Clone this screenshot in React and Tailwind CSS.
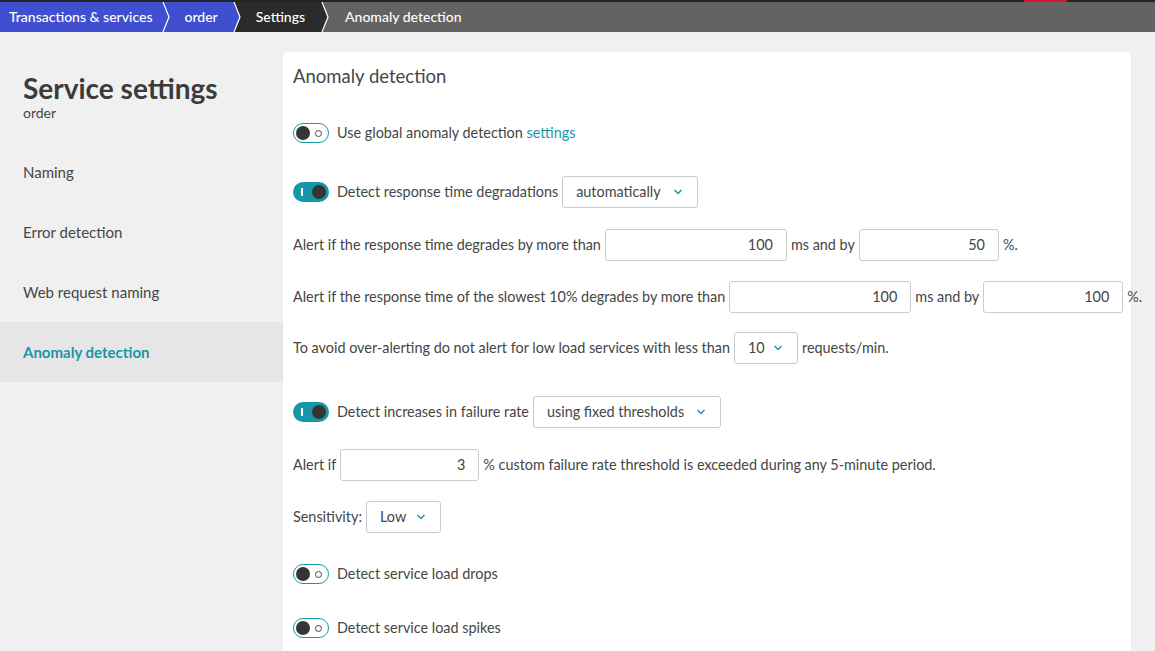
import React from 'react';

const TEXT = 'text-[#454646]';

const Chevron = ({ left, right }) => (
  <svg width="14" height="30" viewBox="0 0 14 30" className="block shrink-0">
    <rect x="0" y="0" width="14" height="30" fill={right} />
    <polygon points="0,0 5,0 11,15 5,30 0,30" fill={left} />
    <polyline points="5,0 11,15 5,30" fill="none" stroke="#ffffff" strokeWidth="1.2" />
  </svg>
);

const Breadcrumbs = () => (
  <div className="flex h-[30px] items-stretch bg-[#636363] text-[14px] font-medium text-white">
    <div className="flex items-center bg-[#3f4fd0] pb-[2px] pl-[9px] pr-[6px]">Transactions &amp; services</div>
    <Chevron left="#3f4fd0" right="#3f4fd0" />
    <div className="flex items-center bg-[#3f4fd0] pb-[2px] pl-[12px] pr-[11px]">order</div>
    <Chevron left="#3f4fd0" right="#2b2b2b" />
    <div className="flex items-center bg-[#2b2b2b] pb-[2px] pl-[13px] pr-[12px]">Settings</div>
    <Chevron left="#2b2b2b" right="#636363" />
    <div className="flex items-center pb-[2px] pl-[14px]">Anomaly detection</div>
  </div>
);

const Toggle = ({ on }) =>
  on ? (
    <div className="flex h-[20px] w-[36px] shrink-0 items-center justify-between rounded-full bg-[#1796a8] pl-[8px] pr-[3px]">
      <span className="block h-[8px] w-[1.5px] bg-white" />
      <span className="block h-[14px] w-[14px] rounded-full bg-[#353535]" />
    </div>
  ) : (
    <div className="flex h-[20px] w-[36px] shrink-0 items-center justify-between rounded-full border border-[#1796a8] bg-white pl-[2px] pr-[6px]">
      <span className="block h-[14px] w-[14px] rounded-full bg-[#353535]" />
      <span className="block h-[7px] w-[7px] rounded-full border border-[#454646]" />
    </div>
  );

const Caret = () => (
  <svg width="10" height="6" viewBox="0 0 10 6" className="shrink-0">
    <polyline points="1.5,1 5,4.5 8.5,1" fill="none" stroke="#1796a8" strokeWidth="1.4" />
  </svg>
);

const Select = ({ value, width }) => (
  <div className={`flex h-[32px] shrink-0 items-center justify-between rounded-[3px] border border-[#cccccc] bg-white pl-[13px] pr-[14px] ${width}`}>
    <span>{value}</span>
    <Caret />
  </div>
);

const NumInput = ({ value, width }) => (
  <div className={`flex h-[32px] shrink-0 items-center justify-end rounded-[3px] border border-[#cccccc] bg-white pr-[13px] ${width}`}>
    {value}
  </div>
);

const Row = ({ children, className = '' }) => (
  <div className={`flex h-[34px] items-center gap-[4px] whitespace-nowrap ${className}`}>{children}</div>
);

const navItems = ['Naming', 'Error detection', 'Web request naming', 'Anomaly detection'];

export default function App() {
  return (
    <div
      className={`h-[651px] overflow-hidden bg-[#f0f0f0] ${TEXT}`}
      style={{ fontFamily: 'Lato, "Open Sans", sans-serif' }}
    >
      <div className="relative h-[2px] bg-[#242424]">
        <div className="absolute left-[1024px] top-0 h-[2px] w-[43px] bg-[#dc172a]" />
      </div>
      <Breadcrumbs />

      <div className="flex pt-[20px]">
        <aside className="w-[283px] shrink-0">
          <div className="pl-[23px] pt-[20px]">
            <h1 className="text-[28px] font-bold leading-[32px] text-[#3b3b3b]">Service settings</h1>
            <div className="mt-[-2px] text-[14px]">order</div>
          </div>
          <nav className="mt-[19px]">
            {navItems.map((item) => {
              const active = item === 'Anomaly detection';
              return (
                <div
                  key={item}
                  className={`flex h-[60px] items-center pl-[23px] text-[15px] ${
                    active ? 'bg-[#e6e6e6] font-bold text-[#1796a8]' : ''
                  }`}
                >
                  {item}
                </div>
              );
            })}
          </nav>
        </aside>

        <main className="h-[700px] w-[848px] shrink-0 rounded-t-[4px] bg-white pl-[10px] pt-[13px] text-[14.4px]">
          <h2 className="text-[18.5px] leading-[22px]">Anomaly detection</h2>

          <Row className="mt-[29px]">
            <Toggle on={false} />
            <span className="ml-[4px]">
              Use global anomaly detection <span className="text-[#1796a8]">settings</span>
            </span>
          </Row>

          <Row className="mt-[25px]">
            <Toggle on />
            <span className="ml-[4px]">Detect response time degradations</span>
            <Select value="automatically" width="w-[136px]" />
          </Row>

          <Row className="mt-[19px]">
            <span>Alert if the response time degrades by more than</span>
            <NumInput value="100" width="w-[182px]" />
            <span>ms and by</span>
            <NumInput value="50" width="w-[140px]" />
            <span>%.</span>
          </Row>

          <Row className="mt-[18px]">
            <span>Alert if the response time of the slowest 10% degrades by more than</span>
            <NumInput value="100" width="w-[182px]" />
            <span>ms and by</span>
            <NumInput value="100" width="w-[140px]" />
            <span>%.</span>
          </Row>

          <Row className="mt-[17px]">
            <span>To avoid over-alerting do not alert for low load services with less than</span>
            <Select value="10" width="w-[64px]" />
            <span>requests/min.</span>
          </Row>

          <Row className="mt-[30px]">
            <Toggle on />
            <span className="ml-[4px]">Detect increases in failure rate</span>
            <Select value="using fixed thresholds" width="w-[188px]" />
          </Row>

          <Row className="mt-[19px]">
            <span>Alert if</span>
            <NumInput value="3" width="w-[139px]" />
            <span>% custom failure rate threshold is exceeded during any 5-minute period.</span>
          </Row>

          <Row className="mt-[18px]">
            <span>Sensitivity:</span>
            <Select value="Low" width="w-[75px]" />
          </Row>

          <Row className="mt-[23px]">
            <Toggle on={false} />
            <span className="ml-[4px]">Detect service load drops</span>
          </Row>

          <Row className="mt-[20px]">
            <Toggle on={false} />
            <span className="ml-[4px]">Detect service load spikes</span>
          </Row>
        </main>
      </div>
    </div>
  );
}
